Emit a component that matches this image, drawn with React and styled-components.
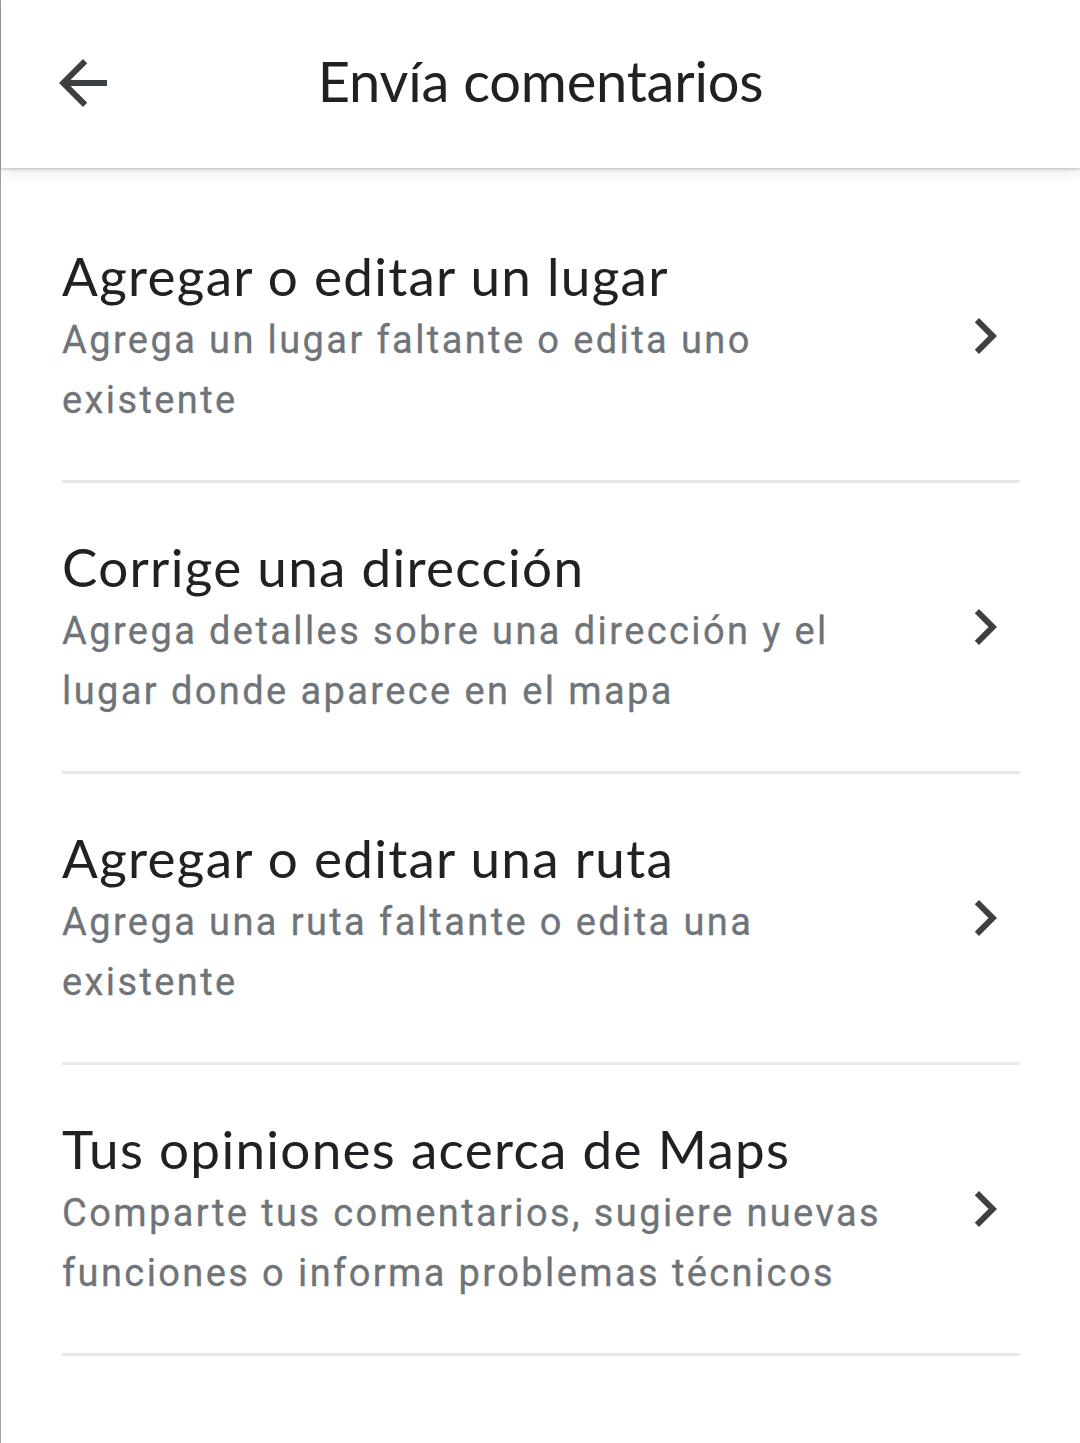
import React from 'react'
import styled, { createGlobalStyle } from 'styled-components'

const GlobalStyle = createGlobalStyle`
	html, body {
		margin: 0;
		padding: 0;
		background: #ffffff;
	}
	* {
		box-sizing: border-box;
	}
`

const Page = styled.div`
	min-height: 1443px;
	background: #ffffff;
	border-left: 1px solid #a3a3a3;
	font-family: Roboto, 'Noto Sans', sans-serif;
`

const TopBar = styled.header`
	position: relative;
	z-index: 1;
	height: 168px;
	background: #ffffff;
	display: grid;
	grid-template-columns: 1fr auto 1fr;
	align-items: center;
	padding: 0 46px;
	box-shadow: 0 1px 3px rgba(60, 64, 67, 0.3), 0 4px 14px rgba(60, 64, 67, 0.12);
`

const BackButton = styled.button`
	width: 72px;
	height: 72px;
	padding: 0;
	border: none;
	background: none;
	display: flex;
	align-items: center;
	justify-content: center;
	color: #3c4043;
	justify-self: start;
	margin-top: -2px;
`

const Title = styled.h1`
	margin: 0;
	font-family: Lato, Roboto, sans-serif;
	font-weight: 400;
	font-size: 56px;
	letter-spacing: -0.2px;
	color: #202124;
	margin-top: -7px;
`

const List = styled.ul`
	list-style: none;
	margin: 0;
	padding: 24px 60px 0 61px;
`

const Row = styled.li`
	display: flex;
	align-items: center;
	justify-content: space-between;
	gap: 16px;
	padding: 50px 0 50px;
	border-bottom: 3px solid #e8e8e8;
`

const RowText = styled.div`
	display: flex;
	flex-direction: column;
	max-width: 860px;
`

const RowTitle = styled.h2`
	margin: 0;
	font-family: Lato, Roboto, sans-serif;
	font-weight: 400;
	font-size: 53px;
	letter-spacing: 1.3px;
	line-height: 68px;
	color: #202124;
`

const RowSubtitle = styled.p`
	margin: 0;
	font-size: 38px;
	letter-spacing: 2.4px;
	line-height: 60px;
	color: #6f7479;
	-webkit-text-stroke: 0.3px #6f7479;
`

const Chevron = styled.span`
	flex: none;
	width: 72px;
	height: 72px;
	display: flex;
	color: #3c4043;
	margin-right: -1px;
`

const items = [
	{
		title: 'Agregar o editar un lugar',
		text: 'Agrega un lugar faltante o edita uno existente',
	},
	{
		title: 'Corrige una dirección',
		text: 'Agrega detalles sobre una dirección y el lugar donde aparece en el mapa',
	},
	{
		title: 'Agregar o editar una ruta',
		text: 'Agrega una ruta faltante o edita una existente',
	},
	{
		title: 'Tus opiniones acerca de Maps',
		text: 'Comparte tus comentarios, sugiere nuevas funciones o informa problemas técnicos',
	},
]

function ArrowBack() {
	return (
		<svg width="72" height="72" viewBox="0 0 24 24" fill="currentColor">
			<path d="M20 11H7.83l5.59-5.59L12 4l-8 8 8 8 1.41-1.41L7.83 13H20v-2z" />
		</svg>
	)
}

function ChevronRight() {
	return (
		<Chevron>
			<svg width="72" height="72" viewBox="0 0 24 24" fill="currentColor">
				<path d="M10 6L8.59 7.41 13.17 12l-4.58 4.59L10 18l6-6z" />
			</svg>
		</Chevron>
	)
}

function FeedbackItem({ title, text }) {
	return (
		<Row>
			<RowText>
				<RowTitle>{title}</RowTitle>
				<RowSubtitle>{text}</RowSubtitle>
			</RowText>
			<ChevronRight />
		</Row>
	)
}

export default function App() {
	return (
		<Page>
			<GlobalStyle />
			<TopBar>
				<BackButton aria-label="Atrás">
					<ArrowBack />
				</BackButton>
				<Title>Envía comentarios</Title>
				<span />
			</TopBar>
			<List>
				{items.map(item => (
					<FeedbackItem key={item.title} {...item} />
				))}
			</List>
		</Page>
	)
}
